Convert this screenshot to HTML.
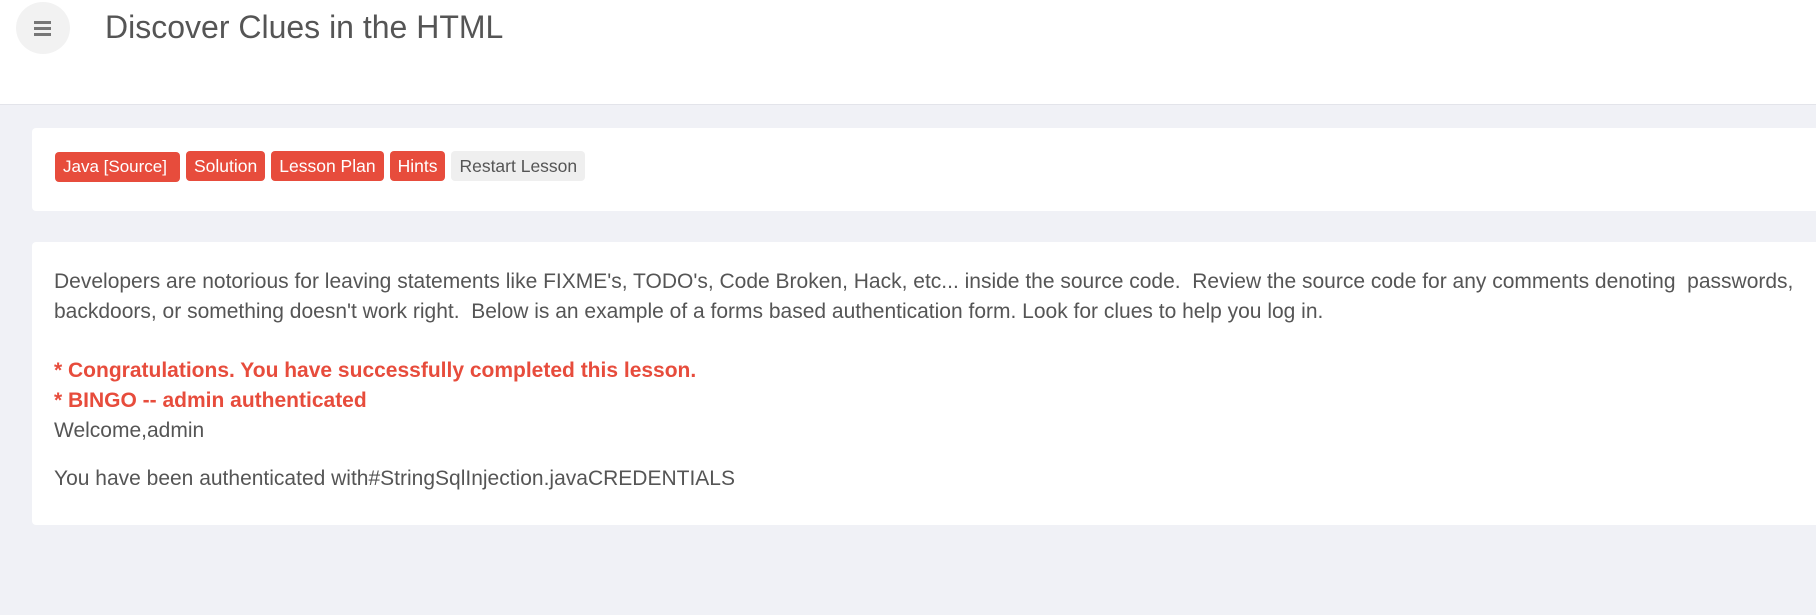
<!DOCTYPE html>
<html><head><meta charset="utf-8"><style>
body{margin:0;width:1816px;height:615px;overflow:hidden;background:#f0f1f6;font-family:"Liberation Sans",Arial,sans-serif;color:#555;}
.hdr{position:absolute;left:0;top:0;width:1816px;height:104px;background:#fff;border-bottom:1px solid #e3e4ea;}
.ham{position:absolute;left:16px;top:2px;width:54px;height:52px;border-radius:50%;background:#f2f2f2;}
.ham i{position:absolute;left:18px;width:17px;height:3px;background:#777;}
h1{position:absolute;left:105px;top:9px;margin:0;font-weight:normal;font-size:32px;color:#555;}
.p1{position:absolute;left:32px;top:128px;width:1800px;height:83px;background:#fff;border-radius:4px;}
.btns{position:absolute;left:23px;top:23px;font-size:0;}
.b{display:inline-block;height:30px;line-height:30px;font-size:17.5px;padding:0 8px;border-radius:4px;background:#e74c3c;color:#fff;margin-right:6px;}
.b.g{background:#efefef;color:#555;}
.p2{position:absolute;left:32px;top:242px;width:1800px;height:283px;background:#fff;border-radius:4px;}
.t{position:absolute;left:22px;top:25px;font-size:21px;line-height:30px;width:1790px;white-space:nowrap;}
.r{color:#e74c3c;font-weight:bold;}
</style></head><body>
<div class="hdr"><div class="ham"><i style="top:19px"></i><i style="top:25px"></i><i style="top:31px"></i></div><h1>Discover Clues in the HTML</h1></div>
<div class="p1"><div class="btns"><span class="b" style="width:109px;font-size:17px">Java [Source]</span><span class="b">Solution</span><span class="b">Lesson Plan</span><span class="b">Hints</span><span class="b g">Restart Lesson</span></div></div>
<div class="p2"><div class="t">Developers are notorious for leaving statements like FIXME's, TODO's, Code Broken, Hack, etc... inside the source code.&nbsp; Review the source code for any comments denoting &nbsp;passwords,<br>backdoors, or something doesn't work right.&nbsp; Below is an example of a forms based authentication form. Look for clues to help you log in.<br><div style="height:29px"></div><span class="r">* Congratulations. You have successfully completed this lesson.</span><br><span class="r">* BINGO -- admin authenticated</span><br>Welcome,admin<br><div style="height:18px"></div>You have been authenticated with#StringSqlInjection.javaCREDENTIALS</div></div>
</body></html>
